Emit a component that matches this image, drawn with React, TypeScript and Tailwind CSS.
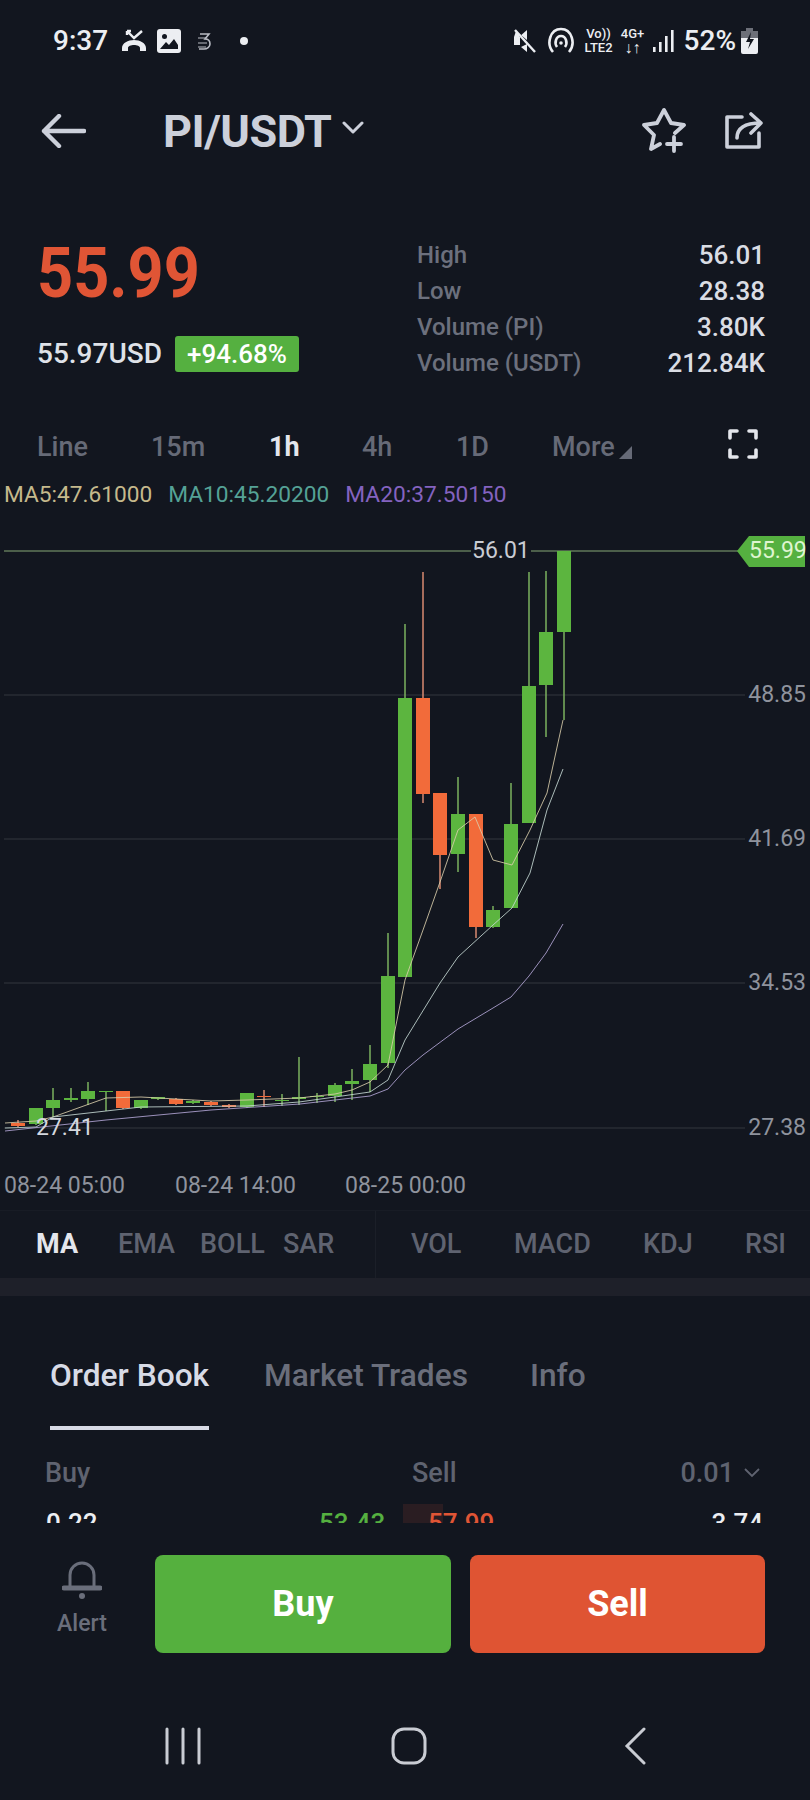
/* candles: x centre, body top, body bottom, wick top, wick bottom, up */
type Candle = [number, number, number, number, number, boolean];

const CANDLES: Candle[] = [
  [18, 1123, 1126, 1120, 1127, false],
  [36, 1108, 1124, 1108, 1125, true],
  [53, 1100, 1108, 1088, 1117, true],
  [71, 1098, 1100, 1088, 1102, true],
  [88, 1091, 1099, 1082, 1105, true],
  [106, 1091, 1092, 1091, 1111, true],
  [123, 1091, 1108, 1091, 1109, false],
  [141, 1100, 1108, 1100, 1109, true],
  [158, 1097, 1099, 1097, 1100, true],
  [176, 1099, 1104, 1098, 1105, false],
  [193, 1101, 1103, 1100, 1104, true],
  [211, 1102, 1105, 1101, 1106, false],
  [229, 1105, 1107, 1104, 1108, false],
  [247, 1093, 1107, 1093, 1108, true],
  [264, 1096, 1097, 1090, 1107, false],
  [282, 1100, 1101, 1094, 1106, true],
  [299, 1097, 1099, 1057, 1105, true],
  [317, 1096, 1097, 1093, 1103, true],
  [335, 1085, 1096, 1083, 1102, true],
  [352, 1081, 1084, 1069, 1100, true],
  [370, 1064, 1080, 1045, 1092, true],
  [388, 976, 1063, 933, 1068, true],
  [405, 698, 977, 624, 977, true],
  [423, 698, 794, 572, 803, false],
  [440, 793, 855, 793, 889, false],
  [458, 814, 854, 777, 872, true],
  [476, 814, 927, 814, 938, false],
  [493, 910, 927, 906, 928, true],
  [511, 824, 908, 783, 908, true],
  [529, 686, 823, 572, 823, true],
  [546, 632, 685, 571, 737, true],
  [564, 551, 632, 551, 720, true],
];

const MA5 =
  "5,1123 36,1121 53,1117 106,1098 141,1097 176,1099 211,1101 247,1100 299,1098 335,1094 352,1090 370,1082 388,1065 405,980 423,930 440,882 458,830 475,817 493,860 512,865 530,830 547,793 563,720";
const MA10 =
  "5,1128 36,1127 53,1117 106,1111 141,1107 247,1106 299,1102 335,1097 370,1092 388,1080 405,1040 440,983 458,957 493,925 512,908 530,873 547,810 563,769";
const MA20 =
  "5,1131 106,1120 211,1110 300,1104 335,1100 370,1096 388,1089 405,1070 423,1055 458,1029 493,1008 511,997 529,976 546,953 563,924";

const GRID = [
  { y: 695, label: "48.85" },
  { y: 839, label: "41.69" },
  { y: 983, label: "34.53" },
  { y: 1128, label: "27.38" },
];

const STATS = [
  ["High", "56.01"],
  ["Low", "28.38"],
  ["Volume (PI)", "3.80K"],
  ["Volume (USDT)", "212.84K"],
];

function StatusBar() {
  return (
    <div className="flex h-[82px] shrink-0 items-center pl-[53px] pr-[52px] text-[#eceef2]">
      <span className="w-[68px] text-[28px] font-medium leading-none">9:37</span>
      <svg width="26" height="24" viewBox="0 0 26 24" fill="none" className="shrink-0">
        <path d="M1 19c0-5 6-8 12-8s12 3 12 8v3h-6v-3c0-2-3-3-6-3s-6 1-6 3v3H1z" fill="currentColor" />
        <path d="M6 2l7 7 8-7M6 2v4M6 2h4" stroke="currentColor" strokeWidth="2.4" />
      </svg>
      <svg width="24" height="24" viewBox="0 0 24 24" className="ml-[10px] shrink-0">
        <rect width="24" height="24" rx="3" fill="currentColor" />
        <circle cx="7.5" cy="7.5" r="2.5" fill="#12161f" />
        <path d="M3 20l6-7 3 3 5-6 4 6v4H3z" fill="#12161f" />
      </svg>
      <svg width="15" height="20" viewBox="0 0 15 20" fill="none" className="ml-[16px] shrink-0">
        <path d="M3 3h9l-4 5c3 0 5 2 5 5s-3 5-6 5H2" stroke="#b9bcc4" strokeWidth="1.6" />
        <path d="M1 7h8M1 12h9M1 16h8" stroke="#b9bcc4" strokeWidth="1" />
      </svg>
      <span className="ml-[28px] h-[8px] w-[8px] rounded-full bg-[#eceef2]" />
      <svg width="24" height="26" viewBox="0 0 24 26" className="ml-auto shrink-0">
        <path d="M1 9h5l8-7v10L3 3z M14 16v8l-6-5z" fill="currentColor" />
        <path d="M1 9h6v8H1z" fill="currentColor" />
        <path d="M2 2l20 22" stroke="currentColor" strokeWidth="2.4" />
      </svg>
      <svg width="28" height="28" viewBox="0 0 28 28" fill="none" stroke="currentColor" strokeWidth="2.6" className="ml-[10px] shrink-0">
        <path d="M6 25C-1 17 3 2 14 2s15 15 8 23" />
        <path d="M10 20c-3-4-1-11 4-11s7 7 4 11" />
        <circle cx="14" cy="16" r="1.8" fill="currentColor" stroke="none" />
      </svg>
      <div className="ml-[8px] flex w-[32px] flex-col items-center text-[13px] font-medium leading-[14px]">
        <span>Vo))</span>
        <span>LTE2</span>
      </div>
      <div className="ml-[4px] flex w-[28px] flex-col items-center text-[13px] font-medium leading-[14px]">
        <span>4G+</span>
        <span className="text-[16px] font-bold leading-[14px]">↓↑</span>
      </div>
      <svg width="22" height="24" viewBox="0 0 22 24" className="ml-[6px] shrink-0" fill="currentColor">
        <rect x="0" y="18" width="2.6" height="5" />
        <rect x="6" y="13" width="2.6" height="10" />
        <rect x="12" y="7" width="2.6" height="16" />
        <rect x="18" y="1" width="2.6" height="22" />
      </svg>
      <span className="ml-[9px] text-[28px] font-medium leading-none">52%</span>
      <svg width="17" height="26" viewBox="0 0 17 26" className="ml-[5px] shrink-0">
        <path d="M5 0h7v3h5v8H0V3h5z" fill="#6c6f78" />
        <path d="M0 10h17v14a2 2 0 0 1-2 2H2a2 2 0 0 1-2-2z" fill="currentColor" />
        <path d="M10 4l-5 10h4l-2 7 6-10h-4z" fill="#12161f" />
      </svg>
    </div>
  );
}

function Header() {
  return (
    <div className="flex h-[98px] shrink-0 items-center pl-[41px] pr-[47px] text-[#ccd0da]">
      <svg width="45" height="34" viewBox="0 0 45 34" fill="none" stroke="currentColor" strokeWidth="4.4" strokeLinecap="round" strokeLinejoin="round">
        <path d="M43 17H3M18 2L3 17l15 15" />
      </svg>
      <span className="ml-[77px] text-[45px] font-bold leading-none tracking-[-0.5px]">PI/USDT</span>
      <svg width="22" height="14" viewBox="0 0 22 14" fill="none" stroke="currentColor" strokeWidth="3" strokeLinecap="round" strokeLinejoin="round" className="mb-[6px] ml-[11px]">
        <path d="M2 2l9 9 9-9" />
      </svg>
      <svg width="46" height="46" viewBox="0 0 46 46" fill="none" stroke="currentColor" strokeWidth="3.8" strokeLinejoin="round" strokeLinecap="round" className="ml-auto">
        <path d="M33 25l9-8-13-2-7-13-7 13-13 2 10 10-3 14 9-5" />
        <path d="M32 29v14M25 36h14" />
      </svg>
      <svg width="38" height="38" viewBox="0 0 38 38" fill="none" stroke="currentColor" strokeWidth="3.6" strokeLinejoin="round" strokeLinecap="round" className="ml-[37px]">
        <path d="M17 5H2v30h32V21" />
        <path d="M12 26c0-9 7-15 24-15M26 2l10 9-10 10" />
      </svg>
    </div>
  );
}

function Stats() {
  return (
    <div className="flex h-[241px] shrink-0 pl-[37px] pr-[45px]">
      <div className="w-[380px] pt-[60px]">
        <div className="origin-left scale-x-[0.9] text-[70px] font-bold leading-[66px] text-[#e05535]">55.99</div>
        <div className="mt-[27px] flex items-center text-[28px] font-medium text-[#dfe2e8]">
          <span className="w-[138px]">55.97USD</span>
          <span className="flex h-[36px] w-[124px] items-center justify-center rounded-[3px] bg-[#55b040] text-[26px] text-white">+94.68%</span>
        </div>
      </div>
      <div className="flex-1 pt-[57px] text-[24px] font-medium leading-[36px]">
        {STATS.map(([label, value]) => (
          <div key={label} className="flex justify-between">
            <span className="text-[#6c707d]">{label}</span>
            <span className="text-[26px] text-[#dadde4]">{value}</span>
          </div>
        ))}
      </div>
    </div>
  );
}

function Timeframes() {
  return (
    <div className="flex h-[52px] shrink-0 items-center pl-[37px] text-[27px] font-medium text-[#666a77]">
      <span className="w-[114px]">Line</span>
      <span className="w-[118px]">15m</span>
      <span className="w-[93px] font-bold text-[#e4e6ec]">1h</span>
      <span className="w-[94px]">4h</span>
      <span className="w-[96px]">1D</span>
      <span>More</span>
      <span className="ml-[4px] mt-[10px] h-0 w-0 border-b-[13px] border-l-[13px] border-b-[#666a77] border-l-transparent" />
      <svg width="30" height="30" viewBox="0 0 30 30" fill="none" stroke="#e4e6ec" strokeWidth="3.6" strokeLinecap="round" strokeLinejoin="round" className="ml-auto mr-[52px] mb-[6px]">
        <path d="M2 9V2h7M21 2h7v7M28 21v7h-7M9 28H2v-7" />
      </svg>
    </div>
  );
}

function Chart() {
  return (
    <div className="relative h-[695px] shrink-0 text-[23px] text-[#8f939d]">
      {/* viewBox keeps the picture's y values so candles read as measured */}
      <svg width="810" height="695" viewBox="0 515 810 695" className="block">
        <line x1="4" x2="738" y1="551" y2="551" stroke="#86a877" strokeWidth="1" />
        {GRID.map((g) => (
          <line key={g.y} x1="4" x2="745" y1={g.y} y2={g.y} stroke="#33373f" strokeWidth="1" />
        ))}
        {CANDLES.map(([x, top, bottom, high, low, up]) => (
          <g key={x}>
            <line x1={x} x2={x} y1={high} y2={low} stroke={up ? "#7bb25f" : "#d98a70"} strokeWidth="1.5" />
            <rect x={x - 7} y={top} width="14" height={bottom - top} fill={up ? "#5cb53f" : "#f26b3a"} />
          </g>
        ))}
        <polyline points={MA5} fill="none" stroke="#d8ccaa" strokeWidth="1" opacity="0.85" />
        <polyline points={MA10} fill="none" stroke="#c6d8d4" strokeWidth="1" opacity="0.85" />
        <polyline points={MA20} fill="none" stroke="#b3a6d6" strokeWidth="1" opacity="0.85" />
        <path d="M737 551l12-15h56v31h-56z" fill="#55b040" />
      </svg>
      <span className="absolute left-[471px] top-[23px] bg-[#12161f] px-[1px] leading-[26px] text-[#c9ccd3]">56.01</span>
      <span className="absolute left-[749px] top-[23px] leading-[26px] text-[#dff5d0]">55.99</span>
      {GRID.map((g) => (
        <span key={g.label} className="absolute right-[4px] leading-[26px]" style={{ top: g.y - 515 - 13 }}>
          {g.label}
        </span>
      ))}
      <span className="absolute left-[36px] top-[600px] leading-[26px] text-[#d5d8de]">27.41</span>
      <span className="absolute left-[4px] top-[658px] leading-[26px]">08-24 05:00</span>
      <span className="absolute left-[175px] top-[658px] leading-[26px]">08-24 14:00</span>
      <span className="absolute left-[345px] top-[658px] leading-[26px]">08-25 00:00</span>
    </div>
  );
}

function Indicators() {
  return (
    <div className="flex h-[68px] shrink-0 items-center border-t border-[#181c25] bg-[#131720] pl-[36px] text-[27px] font-medium text-[#5f6370]">
      <span className="w-[82px] font-bold text-[#e4e6ec]">MA</span>
      <span className="w-[82px]">EMA</span>
      <span className="w-[83px]">BOLL</span>
      <span className="w-[92px]">SAR</span>
      <span className="h-full w-[36px] border-l border-[#1b1f28]" />
      <span className="w-[103px]">VOL</span>
      <span className="w-[129px]">MACD</span>
      <span className="w-[102px]">KDJ</span>
      <span>RSI</span>
    </div>
  );
}

function OrderBook() {
  return (
    <div className="h-[227px] shrink-0 overflow-hidden">
      <div className="flex h-[154px] items-start pl-[50px] pt-[59px] text-[31.7px] font-medium leading-[42px] text-[#6a6e7b]">
        <div className="relative w-[214px]">
          <span className="text-[#d8dbe6]">Order Book</span>
          <span className="absolute left-0 top-[71px] h-[4px] w-[159px] bg-[#d8dbe6]" />
        </div>
        <span className="w-[266px]">Market Trades</span>
        <span>Info</span>
      </div>
      <div className="flex h-[46px] items-center pl-[45px] pr-[50px] text-[27px] font-medium text-[#5f6370]">
        <span className="w-[367px]">Buy</span>
        <span>Sell</span>
        <span className="ml-auto">0.01</span>
        <svg width="16" height="10" viewBox="0 0 16 10" fill="none" stroke="currentColor" strokeWidth="1.8" className="ml-[10px]">
          <path d="M1 1l7 7 7-7" />
        </svg>
      </div>
      <div className="relative flex pl-[46px] pr-[47px] pt-[12px] text-[26px] font-medium leading-[30px]">
        <span className="w-[273px] text-[#eceef2]">0.22</span>
        <span className="w-[84px] text-[#55b040]">53.43</span>
        <span className="absolute left-[403px] top-[8px] h-[24px] w-[40px] bg-[#2a1d22]" />
        <span className="relative ml-[25px] text-[#e05535]">57.99</span>
        <span className="ml-auto text-[#eceef2]">3.74</span>
      </div>
    </div>
  );
}

function ActionBar() {
  return (
    <div className="flex h-[130px] shrink-0 items-start pl-[54px] pr-[45px] pt-[32px]">
      <div className="flex w-[56px] flex-col items-center pt-[4px] text-[#6a6e7b]">
        <svg width="40" height="40" viewBox="0 0 40 40" fill="none" stroke="currentColor" strokeWidth="3" strokeLinecap="round">
          <path d="M8 29V16a12 12 0 0 1 24 0v13" />
          <path d="M2 29h36" strokeWidth="5" />
          <circle cx="20" cy="37" r="3" fill="currentColor" stroke="none" />
        </svg>
        <span className="mt-[11px] text-[23px] font-medium leading-[28px]">Alert</span>
      </div>
      <button className="ml-[45px] flex h-[98px] w-[296px] items-center justify-center rounded-[8px] bg-[#55b03e] text-[36px] font-bold text-white">
        Buy
      </button>
      <button className="ml-[19px] flex h-[98px] w-[295px] items-center justify-center rounded-[8px] bg-[#df5433] text-[36px] font-bold text-white">
        Sell
      </button>
    </div>
  );
}

function NavBar() {
  return (
    <div className="flex flex-1 items-start pl-[165px] pt-[74px] text-[#c9ccd3]">
      <svg width="36" height="38" viewBox="0 0 36 38" stroke="currentColor" strokeWidth="3" strokeLinecap="round">
        <path d="M2 2v34M18 2v34M34 2v34" />
      </svg>
      <svg width="36" height="38" viewBox="0 0 36 38" fill="none" stroke="currentColor" strokeWidth="3" className="ml-[190px]">
        <rect x="2" y="2" width="32" height="34" rx="11" />
      </svg>
      <svg width="22" height="38" viewBox="0 0 22 38" fill="none" stroke="currentColor" strokeWidth="3" strokeLinecap="round" className="ml-[197px]">
        <path d="M20 2L3 19l17 17" />
      </svg>
    </div>
  );
}

export default function App() {
  return (
    <div className="flex h-[1800px] w-[810px] flex-col overflow-hidden bg-[#12161f] font-['Roboto',sans-serif]">
      <StatusBar />
      <Header />
      <Stats />
      <Timeframes />
      <div className="flex h-[42px] shrink-0 items-start gap-[16px] pl-[4px] pt-[6px] text-[22.7px] leading-[32px]">
        <span className="text-[#c5b98c]">MA5:47.61000</span>
        <span className="text-[#55a296]">MA10:45.20200</span>
        <span className="text-[#8463c0]">MA20:37.50150</span>
      </div>
      <Chart />
      <Indicators />
      <div className="h-[18px] shrink-0 bg-[#1e2029]" />
      <OrderBook />
      <ActionBar />
      <NavBar />
    </div>
  );
}
